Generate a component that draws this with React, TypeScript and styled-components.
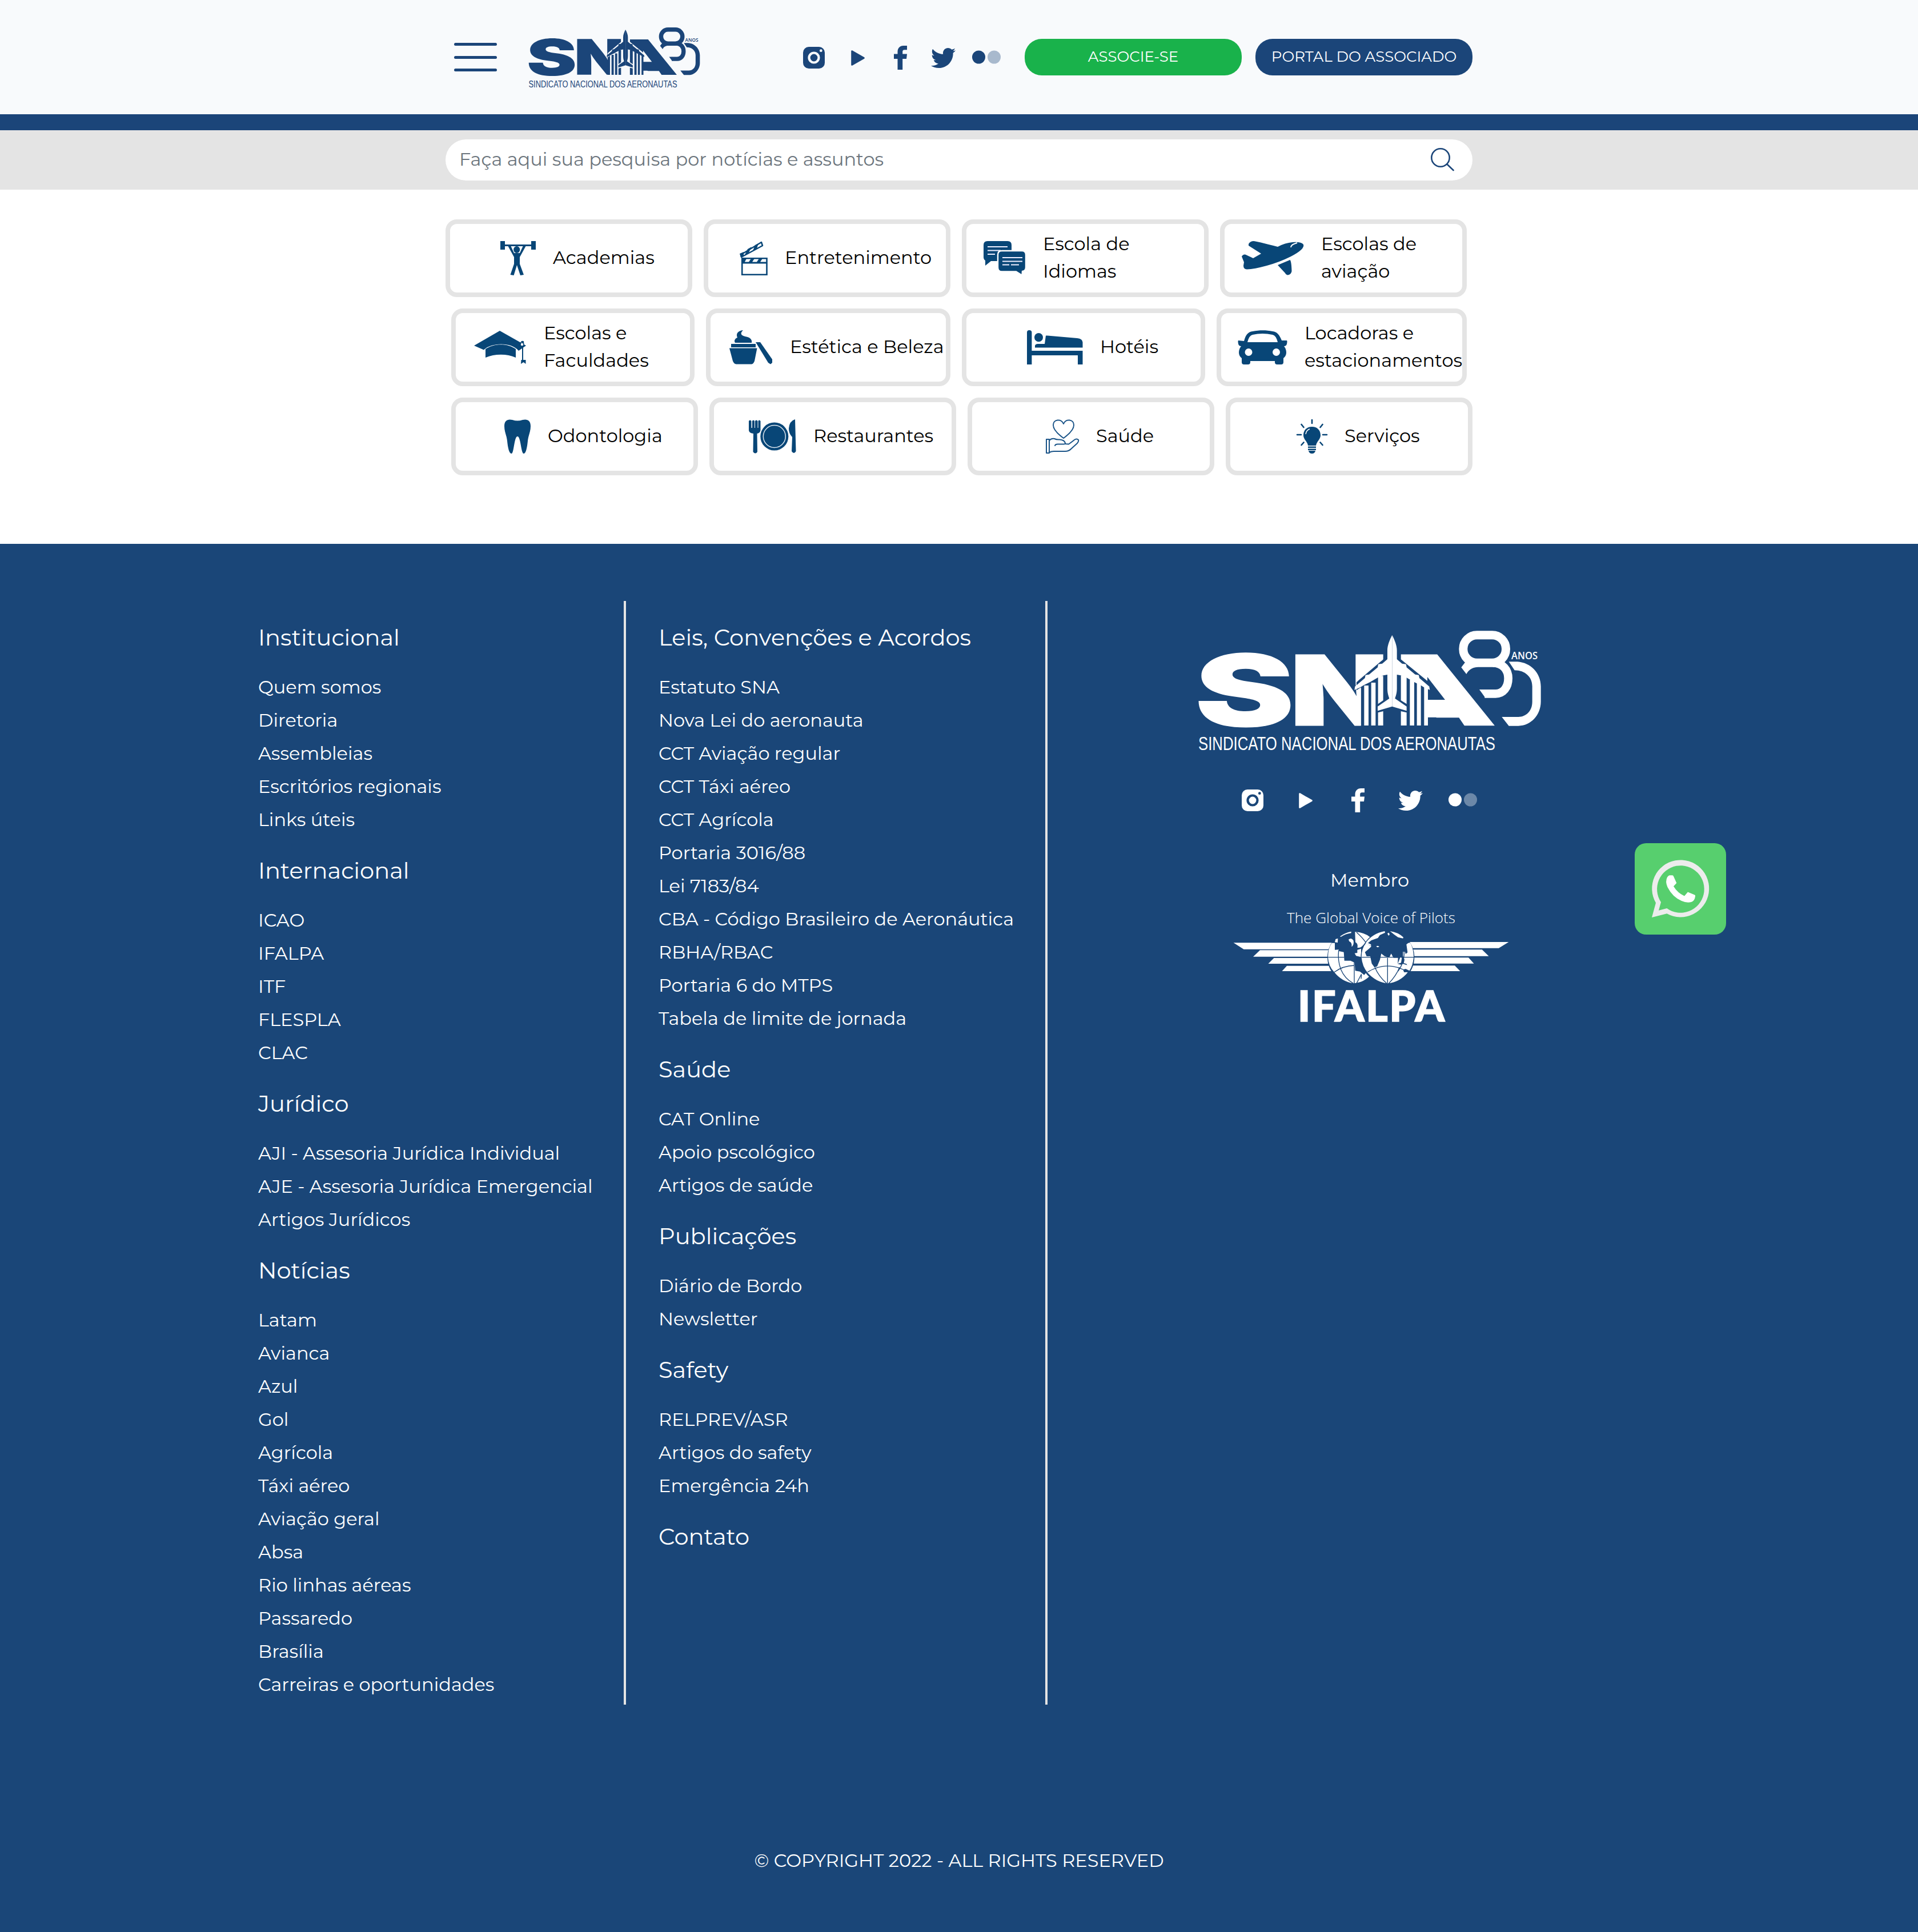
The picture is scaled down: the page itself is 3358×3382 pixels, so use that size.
import React from "react";
import styled, { createGlobalStyle } from "styled-components";
import { FaTwitter } from "react-icons/fa";

const NAVY = "#1b4579";
const FOOT = "#1a4678";
const ICON = "#084677";
const PAPER = "#f8fafc";

const GlobalStyle = createGlobalStyle`
  *, *::before, *::after { box-sizing: border-box; }
  html, body { margin: 0; padding: 0; }
  body {
    background: #fff;
    color: #000;
    font-family: Montserrat, Inter, "Open Sans", sans-serif;
    font-size: 32px;
    line-height: 48px;
  }
  svg { display: block; flex: none; overflow: visible; }
`;

/* ---------- logo ---------- */

const HALF_PLANE =
  "M262 50 C275 76 287 104 287 130 V177 L314 200 L335 203 L338 220 L383 257 L402 260 L405 276 L457 320 L460 338 L430 325 L413 314 L378 297 L338 274 L308 262 L287 258 V330 C287 355 282 368 277 383 L338 425 V448 L262 425 Z";

function Logo({ width, color, ground, id }: { width: number; color: string; ground: string; id: string }) {
  return (
    <svg width={width} height={width * 0.35} viewBox="0 0 600 210" fill={color}>
      <defs>
        <clipPath id={`${id}-n`}>
          <path d="M150 36 H322.7 V50.3 L276 90 V108 L283.7 101 V170 H150Z" />
        </clipPath>
        <clipPath id={`${id}-a`}>
          <path d="M353.7 36 V50.3 L400 88 V170 H560 V36Z" />
        </clipPath>
      </defs>
      <g fontFamily='Inter, "Liberation Sans", sans-serif' fontWeight={900}>
        <text transform="translate(-8 168) scale(1.5 1)" fontSize={176}>
          S
        </text>
        <g clipPath={`url(#${id}-n)`}>
          <text transform="translate(160.4 164.8) scale(1.334 1)" fontSize={167.2} stroke={color} strokeWidth="3">
            N
          </text>
        </g>
        <g clipPath={`url(#${id}-a)`}>
          <text transform="translate(200 166.3) scale(2.4 1)" fontSize={171.5}>
            A
          </text>
        </g>
      </g>
      <g transform="translate(251 -9) scale(.33333)">
        <path d="M447 270 L540 390 H447Z M440 484 H613 L643 528 H440Z" fill={ground} />
        <path d="M447 390 H545 L612 482 H447Z" />
        <path d="M75 340 L98 325 V525 H75Z M115 315 H138 V525 H115Z M152 300 H175 V525 H152Z M188 265 H215 V393 L188 412Z M188 457 L215 450 V525 H188Z M308 262 H338 V412 L308 393Z M308 450 L338 457 V525 H308Z M355 285 H378 V525 H355Z M392 300 H413 V525 H392Z M430 315 H450 V525 H430Z" />
        <path d={HALF_PLANE} />
        <path d={HALF_PLANE} transform="translate(524 0) scale(-1 1)" />
        <rect x="635.5" y="50" width="224" height="146" rx="72" fill="none" stroke={color} strokeWidth="45" />
        <path d="M790 196 C845 196 872 235 872 277 C872 325 845 358 805 358 H748" fill="none" stroke={color} strokeWidth="44" />
        <path d="M720 336 H752 V380Z M625 220 L648 190 H710 V218 C680 220 662 235 652 255Z" />
        <path d="M875 190 H920 C990 195 1043 250 1043 320 V400 C1043 470 990 527 925 527 H875 L838 480 H925 C965 480 998 450 998 400 V320 C998 270 960 235 905 235Z" />
      </g>
      <text x="547" y="49.6" fontFamily='"Open Sans", sans-serif' fontWeight={600} fontSize="17.5" textLength="46" lengthAdjust="spacingAndGlyphs">
        ANOS
      </text>
      <text x="-1" y="209.3" fontFamily='"Liberation Sans", sans-serif' fontSize="33.5" textLength="520" lengthAdjust="spacingAndGlyphs">
        SINDICATO NACIONAL DOS AERONAUTAS
      </text>
    </svg>
  );
}

/* ---------- social icons ---------- */

const SocialRow = styled.div<{ $gap: number; $color: string }>`
  display: flex;
  align-items: center;
  gap: ${(p) => p.$gap}px;
  color: ${(p) => p.$color};
`;
const SocialLink = styled.a`
  width: 50px;
  height: 42px;
  display: flex;
  align-items: center;
  justify-content: center;
  color: inherit;
`;

function Socials({ gap, color, ground }: { gap: number; color: string; ground: string }) {
  return (
    <SocialRow $gap={gap} $color={color}>
      <SocialLink>
        <svg width="38" height="38" viewBox="0 0 38 38">
          <rect width="38" height="38" rx="10" fill="currentColor" />
          <circle cx="19" cy="19" r="8.5" fill="none" stroke={ground} strokeWidth="4.2" />
          <circle cx="31.3" cy="6.7" r="2.4" fill={ground} />
        </svg>
      </SocialLink>
      <SocialLink>
        <svg width="24" height="27" viewBox="-1 0 24 27">
          <path d="M1.5 1.5 L22.5 13.5 L1.5 25.5Z" fill="currentColor" stroke="currentColor" strokeWidth="2.6" strokeLinejoin="round" />
        </svg>
      </SocialLink>
      <SocialLink>
        <svg width="24" height="42" viewBox="-1 0 24 42">
          <path d="M6.5 42 V23 H0 V14.5 H6.5 V11 C6.5 4 10.5 0 16.5 0 H23 V7.3 H18.5 C16 7.3 15.2 8.6 15.2 10.6 V14.5 H23 L22 23 H15.2 V42Z" fill="currentColor" />
        </svg>
      </SocialLink>
      <SocialLink>
        <FaTwitter size={43} />
      </SocialLink>
      <SocialLink>
        <svg width="50" height="26" viewBox="0 0 50 26" fill="currentColor">
          <circle cx="11.5" cy="12" r="11.5" />
          <circle cx="38.5" cy="12" r="11.5" opacity=".36" />
        </svg>
      </SocialLink>
    </SocialRow>
  );
}

/* ---------- header ---------- */

const Header = styled.header`
  height: 228px;
  background: ${PAPER};
  border-bottom: 28px solid ${NAVY};
  display: flex;
  justify-content: center;
`;
const HeaderInner = styled.div`
  width: 1798px;
  display: flex;
  align-items: center;
`;
const MenuButton = styled.button`
  width: 75px;
  height: 50px;
  margin: 0 56px 0 15px;
  padding: 0;
  border: 0;
  background: none;
  display: flex;
  flex-direction: column;
  justify-content: space-between;
`;
const MenuBar = styled.span`
  height: 5px;
  border-radius: 3px;
  background: ${NAVY};
`;
const SocialSlot = styled.div`
  margin: 2px 42px 0 174px;
`;
const Pill = styled.a<{ $bg: string }>`
  width: 380px;
  height: 64px;
  border-radius: 30px;
  margin-right: 24px;
  background: ${(p) => p.$bg};
  color: #fff;
  font-size: 26px;
  line-height: 62px;
  padding-bottom: 2px;
  display: flex;
  align-items: center;
  justify-content: center;
  flex: none;
  &:last-child { margin-right: 0; }
`;

/* ---------- search ---------- */

const SearchBand = styled.div`
  height: 104px;
  background: #e4e4e4;
  display: flex;
  align-items: center;
  justify-content: center;
`;
const SearchField = styled.div`
  width: 1798px;
  height: 72px;
  border-radius: 36px;
  background: #fff;
  color: #6c757d;
  padding: 0 32px 3px 24px;
  display: flex;
  align-items: center;
  justify-content: space-between;
`;

/* ---------- categories ---------- */

const Categories = styled.main`
  width: 1798px;
  height: 620px;
  margin: 0 auto;
  padding-top: 52px;
  display: flex;
  flex-direction: column;
  gap: 20px;
`;
const CategoryRow = styled.div<{ $indent: number }>`
  display: flex;
  gap: 20px;
  padding-left: ${(p) => p.$indent}px;
`;
const Card = styled.a<{ $w: number; $pad: number }>`
  width: ${(p) => p.$w}px;
  height: 136px;
  border: 8px solid #e4e4e4;
  border-radius: 20px;
  padding-left: ${(p) => p.$pad - 8}px;
  display: flex;
  align-items: center;
  gap: 30px;
  white-space: nowrap;
  flex: none;
`;
const CardLabel = styled.span`
  margin-top: -3px;
`;
const CardLine = styled.span`
  display: block;
`;

const icons: Record<string, { w: number; art: React.ReactNode }> = {
  gym: {
    w: 62,
    art: (
      <>
        <path d="M0 0 H8 V15 H0Z M54 0 H62 V15 H54Z M8 6 H54 V9 H8Z" />
        <ellipse cx="28.7" cy="15" rx="5.6" ry="6" />
        <path d="M13 8 H18 L24 21 H34 L40 8 H45 L34 28 V40 L41 59 L35 60 L29 42 L23.5 60 L17.5 59 L24 40 V28Z" />
      </>
    ),
  },
  clapper: {
    w: 50,
    art: (
      <>
        <path d="M3 24 L39 2 L41 8 L4 28Z" fill="none" stroke={ICON} strokeWidth="2.5" strokeLinejoin="round" />
        <path d="M1 22 L8 19 L8 26 L3 28Z M15 14 L22 10 L17 20 L10 24Z M28 7 L34 4 L31 13 L24 17Z" />
        <path d="M5.2 30.2 H48.5 V58.7 H5.2Z" fill="none" stroke={ICON} strokeWidth="2.6" />
        <path d="M5 36.5 H49 V39.5 H5Z M5 29 H14 L9 38 H5Z M22 29 H28 L22 38 H16Z M36 29 H42 L36 38 H30Z" />
      </>
    ),
  },
  chat: {
    w: 74,
    art: (
      <>
        <path d="M7 0 H42 Q49 0 49 7 V28 Q49 35 42 35 H13 L3 43 V34 Q0 32 0 28 V7 Q0 0 7 0Z" />
        <path d="M7 10 H42 M7 16.5 H30 M7 23 H20" stroke="#eef" strokeWidth="2.2" />
        <path d="M32 17 H67 Q74 17 74 24 V46 Q74 52 68 53 L67.5 60 L57 53.5 H32 Q25 53.5 25 46 V24 Q25 17 32 17Z" stroke="#fff" strokeWidth="2.4" />
        <path d="M33 29 H68 M33 35.5 H68 M33 41.5 H45 M48 41.5 H62" stroke="#eef" strokeWidth="2.2" />
      </>
    ),
  },
  plane: {
    w: 109,
    art: (
      <>
        <path d="M12 5 Q15 0 21 0 Q25 0 63 10 Q76 3 89 2 Q104 1 108 6 Q111 14 86 27 Q66 37 44 43 Q22 49 9 49.5 Q3 49 3 43 L4 37 L0 27 Q2 23 6 23.5 Q10 25 20 30 L34 22 L12 8Z" />
        <path d="M63 42 L84.5 33 Q87 35 87.5 53 Q86 59 80 59.5 Q77 59 76 56Z" />
        <path d="M86 11 C86 6 92 5 97 3" fill="none" stroke="#fff" strokeWidth="2" />
      </>
    ),
  },
  cap: {
    w: 92,
    art: (
      <>
        <path d="M45 1 L91 27 L78 36 C66 21 31 21 17 34.5 L0 27Z" />
        <path d="M20 33 C35 22.5 59 22.5 73 33 V48 C58 41 36 41 20 48Z" />
        <path d="M85 20 V52 M82 24 Q82 19 86 20 L87 28" fill="none" stroke={ICON} strokeWidth="2" />
        <circle cx="84" cy="25" r="2.2" fill="#fff" />
        <path d="M82.5 52 H90.5 V59 L86.5 56 L82 59Z" />
      </>
    ),
  },
  jar: {
    w: 76,
    art: (
      <>
        <path d="M24 0 C15 1 11 6 14 13 C9 15 8 19 10 22 H39 C40 17 37 13 30 11.5 C22 10 17 7 24 0Z M3 24 H46 V30 H3Z M0 31.5 H48.5 L44 54 Q42 59 39 59.5 H12 Q8 59 6 54Z" />
        <path d="M46 21 H54 L75 51 V57 L72 59.5 L68 57Z" />
      </>
    ),
  },
  bed: {
    w: 98,
    art: (
      <>
        <path d="M0 4 Q0 0 4 0 Q8.4 0 8.4 4 V36 H97.5 V60 H89 V44 H8.4 V60 H0Z" />
        <ellipse cx="20.5" cy="12.7" rx="7.5" ry="7.6" />
        <path d="M33 9.5 H36 L88 14 Q97 15 97.5 21 V30.5 H14 V27 Q15 24 19 24 H31Z" />
      </>
    ),
  },
  car: {
    w: 87,
    art: (
      <>
        <path
          fillRule="evenodd"
          d="M11 19 C14 8 18 3 26 2 C38 -.5 50 -.5 61 2 C69 3 73 8 77 18 H86 Q87 19 86 24 Q85 28 81 28 Q85 33 85 39 Q85 45 80 49 V56 Q80 60 76 60 H69 Q65 60 65 56 V54 H22 V56 Q22 60 18 60 H11 Q7 60 7 56 V49 Q2 45 2 39 Q2 33 6 28 Q2 28 1 24 Q0 19 1 18Z M17 21 H70 Q67 9 61 8 Q43 4 26 8 Q20 9 17 21Z M12.5 38.5 a6.5 6.5 0 1 0 13 0 a6.5 6.5 0 1 0 -13 0 M61 38.5 a6.5 6.5 0 1 0 13 0 a6.5 6.5 0 1 0 -13 0"
        />
      </>
    ),
  },
  tooth: {
    w: 46,
    art: (
      <path d="M0 12 C0 2 6 -1 14 1 C20 3 26 3 32 1 C40 -1 46 2 46 12 C46 22 42 28 41 38 C40 48 38 60 34 60 C29 60 29 30 23 30 C17 30 17 60 12.5 60 C8 60 6 48 5 38 C4 28 0 22 0 12Z" />
    ),
  },
  dinner: {
    w: 83,
    art: (
      <>
        <path d="M0 3 Q2 0 4.5 3 V15 H6 V3 Q8 0 10 3 V15 H11 V3 Q13 0 15.5 3 V15 H16.5 V3 Q18 0 20.5 3 V19 Q20 24 14.5 25 L15 57 Q11.5 62 7.5 57 L8 25 Q0 24 0 19Z" />
        <circle cx="44.8" cy="30" r="24.5" />
        <circle cx="44.8" cy="30" r="19.5" fill="none" stroke="#dfe8f0" strokeWidth="1.5" />
        <path d="M81 0 Q71 3 70 16 Q70 25 76 31 L75 56 Q79 62 82.5 56Z" />
      </>
    ),
  },
  care: {
    w: 58,
    art: (
      <g fill="none" stroke="#1a5488" strokeWidth="2" strokeLinejoin="round" strokeLinecap="round">
        <path d="M31 33 C20 25 13 18 13 10 C13 0 27 -2 31 8 C35 -2 49 0 49 10 C49 18 42 25 31 33Z" />
        <path d="M1 35 H6 V59 H1Z M6 37 Q10 33 15 34 Q19 36 24 35.5 Q33 36 34 42 Q34 44 28 43.5 H20 M16 46 Q17 43 22 43.5 M34 43 L40 43.5 Q45 40 50 36 Q54 33 57 36 Q58 38 55 42 L44 52 Q40 56 34 56 H14 Q10 56 6 58" />
      </g>
    ),
  },
  bulb: {
    w: 54,
    art: (
      <>
        <path d="M27 13 C36 13 42 19 42 28 C42 35 35 39 34 46 H20 C19 39 12 35 12 28 C12 19 18 13 27 13Z M20 47.5 H34 V50 H20Z M20 51.5 H34 V54 H20Z M21 55 H33 Q32 60 27 60 Q22 60 21 55Z" />
        <path d="M27 1 V7 M8.5 9 L12.5 14 M45.5 9 L41.5 14 M1 27 H8 M46 27 H53 M8.5 45 L12.5 40.5 M45.5 45 L41.5 40.5" fill="none" stroke={ICON} strokeWidth="2.6" strokeLinecap="round" />
        <path d="M16 26 Q17 19 23 17" fill="none" stroke="#fff" strokeWidth="1.5" />
      </>
    ),
  },
};

type CardData = { icon: string; w: number; pad: number; lines: string[] };

const rows: { indent: number; cards: CardData[] }[] = [
  {
    indent: 0,
    cards: [
      { icon: "gym", w: 432, pad: 96, lines: ["Academias"] },
      { icon: "clapper", w: 432, pad: 62, lines: ["Entretenimento"] },
      { icon: "chat", w: 432, pad: 38, lines: ["Escola de", "Idiomas"] },
      { icon: "plane", w: 432, pad: 38, lines: ["Escolas de", "aviação"] },
    ],
  },
  {
    indent: 10,
    cards: [
      { icon: "cap", w: 426, pad: 40, lines: ["Escolas e", "Faculdades"] },
      { icon: "jar", w: 428, pad: 41, lines: ["Estética e Beleza"] },
      { icon: "bed", w: 426, pad: 114, lines: ["Hotéis"] },
      { icon: "car", w: 438, pad: 37, lines: ["Locadoras e", "estacionamentos"] },
    ],
  },
  {
    indent: 10,
    cards: [
      { icon: "tooth", w: 432, pad: 93, lines: ["Odontologia"] },
      { icon: "dinner", w: 432, pad: 69, lines: ["Restaurantes"] },
      { icon: "care", w: 432, pad: 137, lines: ["Saúde"] },
      { icon: "bulb", w: 432, pad: 124, lines: ["Serviços"] },
    ],
  },
];

/* ---------- footer ---------- */

const Footer = styled.footer`
  height: 2430px;
  padding-top: 100px;
  background: ${FOOT};
  color: #fff;
`;
const Columns = styled.div`
  height: 1932px;
  display: flex;
`;
const LinkColumn = styled.nav<{ $w: number; $pad: number }>`
  width: ${(p) => p.$w}px;
  padding: 34px 0 0 ${(p) => p.$pad}px;
  border-right: 4px solid #e4e4e4;
  white-space: nowrap;
  flex: none;
`;
const Group = styled.section`
  padding-bottom: 25px;
`;
const GroupTitle = styled.h2`
  margin: 0 0 33px;
  font-size: 40px;
  font-weight: 400;
  line-height: 60px;
`;
const LinkItem = styled.a`
  display: block;
  height: 58px;
`;
const Brand = styled.div`
  width: 1130px;
  padding-top: 52px;
  display: flex;
  flex-direction: column;
  align-items: center;
`;
const BrandSocials = styled.div`
  margin: 66px 44px 95px 0;
`;
const Member = styled.span`
  margin: 0 2px 20px 0;
`;
const Affiliate = styled.div`
  margin-left: 3px;
`;
const Copyright = styled.p`
  margin: 249px 0 0;
  text-align: center;
`;
const WhatsApp = styled.a`
  position: fixed;
  top: 1476px;
  right: 336px;
  width: 160px;
  height: 160px;
  border-radius: 20px;
  background: #57cf6e;
`;

type GroupData = { title: string; links: string[] };

const columnOne: GroupData[] = [
  { title: "Institucional", links: ["Quem somos", "Diretoria", "Assembleias", "Escritórios regionais", "Links úteis"] },
  { title: "Internacional", links: ["ICAO", "IFALPA", "ITF", "FLESPLA", "CLAC"] },
  {
    title: "Jurídico",
    links: ["AJI - Assesoria Jurídica Individual", "AJE - Assesoria Jurídica Emergencial", "Artigos Jurídicos"],
  },
  {
    title: "Notícias",
    links: [
      "Latam", "Avianca", "Azul", "Gol", "Agrícola", "Táxi aéreo", "Aviação geral", "Absa",
      "Rio linhas aéreas", "Passaredo", "Brasília", "Carreiras e oportunidades",
    ],
  },
];

const columnTwo: GroupData[] = [
  {
    title: "Leis, Convenções e Acordos",
    links: [
      "Estatuto SNA", "Nova Lei do aeronauta", "CCT Aviação regular", "CCT Táxi aéreo", "CCT Agrícola",
      "Portaria 3016/88", "Lei 7183/84", "CBA - Código Brasileiro de Aeronáutica", "RBHA/RBAC",
      "Portaria 6 do MTPS", "Tabela de limite de jornada",
    ],
  },
  { title: "Saúde", links: ["CAT Online", "Apoio pscológico", "Artigos de saúde"] },
  { title: "Publicações", links: ["Diário de Bordo", "Newsletter"] },
  { title: "Safety", links: ["RELPREV/ASR", "Artigos do safety", "Emergência 24h"] },
  { title: "Contato", links: [] },
];

function LinkGroups({ groups }: { groups: GroupData[] }) {
  return (
    <>
      {groups.map((g) => (
        <Group key={g.title}>
          <GroupTitle>{g.title}</GroupTitle>
          {g.links.map((label) => (
            <LinkItem key={label}>{label}</LinkItem>
          ))}
        </Group>
      ))}
    </>
  );
}

function Ifalpa() {
  return (
    <svg width="484" height="210" viewBox="2158 1585 484 210" fill="#fff">
      <text x="2252" y="1615.7" fontFamily='"Open Sans", "Noto Sans", sans-serif' fontWeight={300} fontSize="26" textLength="295" lengthAdjust="spacingAndGlyphs">
        The Global Voice of Pilots
      </text>
      <path d="M2158.6 1650.3 H2345 V1661.7 H2176.5Z M2205 1663.3 H2345 V1674.7 H2193Z M2229.4 1677 H2345 V1687 H2219.4Z M2252 1690.7 H2345 V1700 H2243.5Z" />
      <path d="M2455 1649 H2640.4 L2623 1659.7 H2455Z M2455 1662.3 H2593.7 L2605.5 1673.7 H2455Z M2455 1676.3 H2570 L2579.5 1686.7 H2455Z M2455 1690.3 H2546 L2555.4 1700 H2455Z" />
      <g transform="translate(2300 1610) scale(.33333)">
        <circle cx="210" cy="197" r="141" fill={FOOT} />
        <path d="M92 122 Q72 150 72 197 Q75 245 105 275 Q145 325 205 334 Q265 330 300 285 L275 275 L262 290 L240 272 L215 268 L212 225 L190 215 H158 L155 170 L130 165 L128 157 L108 158 V122Z" />
        <path d="M108 118 L112 102 L124 98 L123 120Z M135 88 Q160 68 194 62 V70 Q165 74 140 90Z M180 104 Q195 92 206 110 Q210 132 196 142 Q200 120 184 114Z M214 64 Q262 66 294 92 L272 118 L250 140 Q240 150 226 146 Q232 128 216 118Z M226 158 L246 152 V196 L220 190 L212 176 L226 174Z" />
        <path d="M72 197 H158 M128 160 Q122 215 140 262 Q160 310 205 334 M210 215 V334 M105 275 Q150 242 212 240 M222 66 Q260 100 276 128 M248 285 L222 334 M248 290 L246 310" stroke={FOOT} strokeWidth="4" fill="none" />
        <circle cx="385" cy="197" r="141" fill={FOOT} />
        <path d="M272 122 Q248 150 248 197 Q252 245 280 278 Q325 328 385 334 Q450 328 492 275 L472 276 L466 262 L490 256 L494 240 L466 232 L455 236 L438 232 L440 200 H416 L404 178 L394 198 L370 192 L352 178 L345 210 L330 245 L316 250 L302 230 L294 192 H275 L266 170 L290 150 L300 140Z" />
        <path d="M484 130 Q502 112 508 128 Q522 160 522 197 Q518 240 500 268 L480 258 L492 245 L484 232 L470 228 L474 210 L466 190 V168 L476 168 L480 180 L490 172Z" />
        <path d="M270 122 Q305 72 370 60 L372 68 L345 80 L334 96 L300 108 L282 122 L298 130 V138Z M325 140 Q335 134 342 142 L332 145Z M384 72 L392 68 L396 78 L390 84Z M398 60 Q440 66 468 92 L466 98 L440 92 L420 78Z M438 232 L446 212 L452 196 L460 200 L456 226Z" />
        <path d="M248 197 H522 M385 200 V334 M280 275 Q385 210 492 275 M318 250 Q340 300 380 334 M448 250 Q430 295 392 334 M470 150 Q480 215 440 270" stroke={FOOT} strokeWidth="4" fill="none" />
      </g>
      <text x="2271" y="1788.3" fontFamily='Lato, "Open Sans", sans-serif' fontWeight={900} fontSize="73.5" textLength="257" lengthAdjust="spacing" stroke="#fff" strokeWidth="1.6">
        IFALPA
      </text>
    </svg>
  );
}

export default function App() {
  return (
    <>
      <GlobalStyle />
      <Header>
        <HeaderInner>
          <MenuButton aria-label="Menu">
            <MenuBar />
            <MenuBar />
            <MenuBar />
          </MenuButton>
          <Logo width={300} color={NAVY} ground={PAPER} id="top" />
          <SocialSlot>
            <Socials gap={25.5} color={NAVY} ground={PAPER} />
          </SocialSlot>
          <Pill $bg="#19b24b">ASSOCIE-SE</Pill>
          <Pill $bg={NAVY}>PORTAL DO ASSOCIADO</Pill>
        </HeaderInner>
      </Header>
      <SearchBand>
        <SearchField>
          <span>Faça aqui sua pesquisa por notícias e assuntos</span>
          <svg width="41" height="41" viewBox="0 0 41 41" fill="none" stroke={NAVY} strokeWidth="2.6" strokeLinecap="round">
            <circle cx="17" cy="18" r="15.7" />
            <path d="M28.5 29.5 L39.5 40" />
          </svg>
        </SearchField>
      </SearchBand>
      <Categories>
        {rows.map((row, i) => (
          <CategoryRow key={i} $indent={row.indent}>
            {row.cards.map((c) => (
              <Card key={c.icon} $w={c.w} $pad={c.pad}>
                <svg width={icons[c.icon].w} height="60" viewBox={`0 0 ${icons[c.icon].w} 60`} fill={ICON}>
                  {icons[c.icon].art}
                </svg>
                <CardLabel>
                  {c.lines.map((t) => (
                    <CardLine key={t}>{t}</CardLine>
                  ))}
                </CardLabel>
              </Card>
            ))}
          </CategoryRow>
        ))}
      </Categories>
      <Footer>
        <Columns>
          <LinkColumn $w={1096} $pad={452}>
            <LinkGroups groups={columnOne} />
          </LinkColumn>
          <LinkColumn $w={738} $pad={57}>
            <LinkGroups groups={columnTwo} />
          </LinkColumn>
          <Brand>
            <Logo width={600} color="#fff" ground={FOOT} id="foot" />
            <BrandSocials>
              <Socials gap={42} color="#fff" ground={FOOT} />
            </BrandSocials>
            <Member>Membro</Member>
            <Affiliate>
              <Ifalpa />
            </Affiliate>
          </Brand>
        </Columns>
        <Copyright>© COPYRIGHT 2022 - ALL RIGHTS RESERVED</Copyright>
      </Footer>
      <WhatsApp aria-label="WhatsApp">
        <svg width="160" height="160" viewBox="0 0 160 160">
          <path
            fill="#ececec"
            fillRule="evenodd"
            d="M30 130 L37 104.5 A50 50 0 1 1 56.3 123.3Z M42 117.7 L46 103.3 A41.3 41.3 0 1 1 56.3 114Z"
          />
          <path
            fill="#fff"
            d="M61 56.3 H66 Q67.5 56.5 68 58 L73.3 69.7 L68 75.5 Q75 87 87 92.5 L93 85.5 L105 90.5 Q106.5 91 106 93 Q105 101 99 103 Q91 105 82 101 Q66 94 57.5 77 Q53 67 57 59.5 Q59 56.5 61 56.3Z"
          />
        </svg>
      </WhatsApp>
    </>
  );
}
